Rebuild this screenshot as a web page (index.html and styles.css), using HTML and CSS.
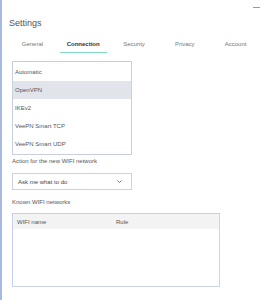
FILE: index.html
```html
<!DOCTYPE html>
<html>
<head>
<meta charset="utf-8">
<link rel="stylesheet" href="styles.css">
</head>
<body>
<div class="window">
  <div class="titlebar"><span class="minimize"></span></div>
  <h1 class="title">Settings</h1>
  <nav class="tabs">
    <span class="tab">General</span>
    <span class="tab active">Connection</span>
    <span class="tab">Security</span>
    <span class="tab">Privacy</span>
    <span class="tab">Account</span>
  </nav>
  <div class="content">
    <ul class="list">
      <li>Automatic</li>
      <li class="selected">OpenVPN</li>
      <li>IKEv2</li>
      <li>VeePN Smart TCP</li>
      <li>VeePN Smart UDP</li>
    </ul>
    <div class="label first">Action for the new WIFI network</div>
    <div class="select">
      <span>Ask me what to do</span>
      <svg class="chev" width="5" height="3" viewBox="0 0 5 3"><path d="M0.5 0.5 L2.5 2.5 L4.5 0.5" fill="none" stroke="#777" stroke-width="1"/></svg>
    </div>
    <div class="label">Known WIFI networks</div>
    <div class="table">
      <div class="thead"><span class="col1">WIFI name</span><span class="col2">Rule</span></div>
    </div>
  </div>
</div>
</body>
</html>
```
FILE: styles.css
```css
* { box-sizing: border-box; }
html, body { margin: 0; padding: 0; background: #fff; }
body { font-family: "Liberation Sans", Arial, sans-serif; }
.window {
  width: 271px;
  height: 300px;
  border-left: 2px solid #aab9e0;
}
.titlebar {
  height: 16px;
  display: flex;
  justify-content: flex-end;
  padding-top: 7px;
  padding-right: 11px;
}
.minimize {
  display: block;
  width: 7px;
  height: 1px;
  background: #9a9a9a;
}
.title {
  margin: 0;
  padding-left: 7px;
  height: 12px;
  margin-top: 1px;
  font-size: 9px;
  line-height: 12px;
  font-weight: normal;
  color: #555;
}
.tabs {
  display: grid;
  grid-template-columns: repeat(5, 1fr);
  width: 254px;
  margin-left: 5px;
  margin-top: 8px;
  height: 16px;
}
.tab {
  font-size: 6px;
  color: #777;
  text-align: center;
  line-height: 14px;
  height: 16px;
  white-space: nowrap;
}
.tab.active {
  font-weight: bold;
  color: #333;
  border-bottom: 1.5px solid #7fdcc0;
  margin: 0 2px;
}
.content {
  padding-left: 10px;
  padding-top: 8px;
}
.list {
  list-style: none;
  margin: 0;
  padding: 1px 0;
  width: 120px;
  border: 1px solid #c9cedc;
}
.list li {
  height: 18px;
  line-height: 18px;
  font-size: 6px;
  color: #555;
  padding-left: 2px;
}
.list li.selected { background: #e1e4eb; }
.label {
  font-size: 6px;
  color: #555;
  line-height: 8px;
  margin-top: 8px;
}
.label.first { margin-top: 2px; }
.select {
  margin-top: 8px;
  width: 120px;
  height: 17px;
  border: 1px solid #ccd2e2;
  display: flex;
  align-items: center;
  justify-content: space-between;
  padding: 0 9px 0 5px;
  font-size: 6px;
  color: #444;
}
.table {
  margin-top: 7px;
  width: 208px;
  height: 74px;
  border: 1px solid #c9d0e2;
  border-right-color: #d0d4dc;
}
.thead {
  height: 15px;
  background: #f3f3f3;
  display: flex;
  align-items: center;
  font-size: 6px;
  color: #555;
}
.col1 { width: 103px; padding-left: 4px; }
```
